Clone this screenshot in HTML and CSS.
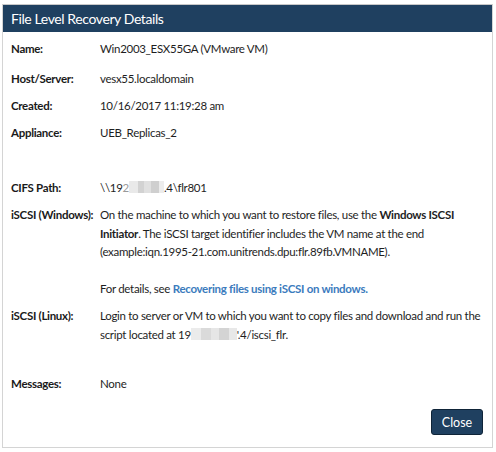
FILE: index.html
```html
<!DOCTYPE html>
<html>
<head>
<meta charset="utf-8">
<link rel="stylesheet" href="styles.css">
</head>
<body>
<div class="dialog">
  <div class="header">File Level Recovery Details</div>
  <div class="content">
    <div class="row r-name"><div class="label">Name:</div><div class="value">Win2003_ESX55GA (VMware VM)</div></div>
    <div class="row"><div class="label">Host/Server:</div><div class="value">vesx55.localdomain</div></div>
    <div class="row"><div class="label">Created:</div><div class="value">10/16/2017 11:19:28 am</div></div>
    <div class="row r-app"><div class="label">Appliance:</div><div class="value">UEB_Replicas_2</div></div>
    <div class="row"><div class="label">CIFS Path:</div><div class="value">\\19<span class="half">2</span><span class="blur b1"></span>.4\flr801</div></div>
    <div class="row"><div class="label">iSCSI (Windows):</div><div class="value">On the machine to which you want to restore files, use the <b>Windows ISCSI Initiator</b>. The iSCSI target identifier includes the VM name at the end (example:iqn.1995-21.com.unitrends.dpu:flr.89fb.VMNAME).<p class="details">For details, see <a href="#">Recovering files using iSCSI on windows.</a></p></div></div>
    <div class="row r-linux"><div class="label">iSCSI (Linux):</div><div class="value">Login to server or VM to which you want to copy files and download and run the script located at 19<span class="blur b2"></span>'.4/iscsi_flr.</div></div>
    <div class="row"><div class="label">Messages:</div><div class="value">None</div></div>
  </div>
  <div class="footer"><button class="btn">Close</button></div>
</div>
</body>
</html>
```
FILE: styles.css
```css
html, body {
  margin: 0;
  padding: 0;
  background: #ffffff;
}
body {
  padding: 4px 0 0 2px;
  font-family: Lato, "Open Sans", sans-serif;
  color: #1e1e1e;
}
.dialog {
  width: 489px;
  height: 442px;
  border: 1px solid #d4d4d4;
  border-top-color: #c8c8c8;
  display: flex;
  flex-direction: column;
}
.header {
  background: #1f4060;
  color: #ffffff;
  height: 27px;
  line-height: 28px;
  font-size: 14px;
  letter-spacing: -0.4px;
  padding-left: 8px;
}
.content {
  flex: 1;
  padding: 8px 0 0 8px;
  font-size: 11.5px;
  letter-spacing: -0.3px;
  line-height: 18.5px;
}
.row {
  display: flex;
  margin-bottom: 8.5px;
}
.r-name { margin-bottom: 11.5px; }
.r-app { margin-bottom: 36.5px; }
.r-linux { margin-bottom: 31px; }
.label {
  width: 89px;
  flex: none;
  white-space: nowrap;
  font-weight: bold;
  color: #1a1a1a;
}
.value {
  width: 386px;
}
.value b { font-weight: bold; }
.details {
  margin: 18.5px 0 0 0;
}
.details a {
  color: #3b7bbd;
  font-weight: bold;
  text-decoration: none;
}
.half { color: #9a9a9a; }
.blur {
  display: inline-block;
  height: 12px;
  vertical-align: -1px;
}
.b1 {
  width: 35px;
  background: linear-gradient(90deg, #e9e9e9 0 9px, #d2d2d2 9px 15px, #e0e0e0 15px 22px, #cfcfcf 22px 30px, #ececec 30px 35px);
}
.b2 {
  width: 46px;
  background: linear-gradient(90deg, #ebebeb 0 10px, #dadada 10px 20px, #e6e6e6 20px 28px, #d4d4d4 28px 38px, #e8e8e8 38px 46px);
}
.footer {
  display: flex;
  justify-content: flex-end;
  padding: 0 9px 12px 0;
}
.btn {
  width: 52px;
  height: 26px;
  background: #1f4060;
  border: 1px solid #0f2438;
  border-radius: 3px;
  color: #ffffff;
  font-family: Lato, sans-serif;
  font-size: 12.5px;
  padding: 0;
}
```
